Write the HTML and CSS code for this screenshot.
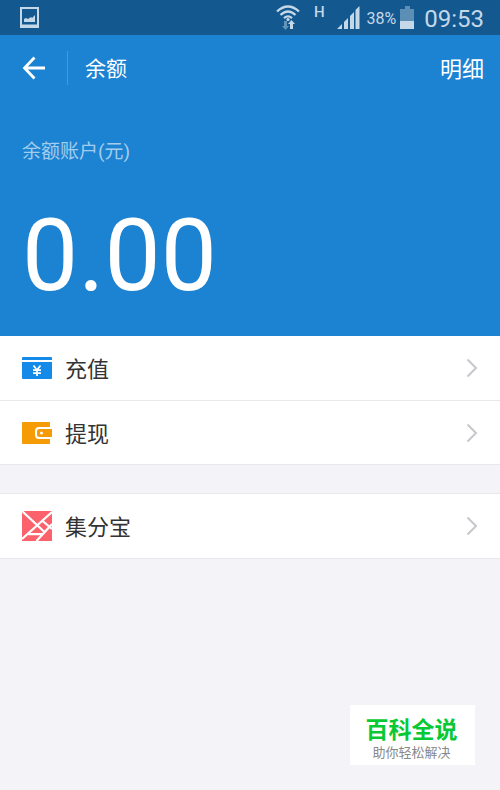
FILE: index.html
```html
<!DOCTYPE html>
<html lang="zh-CN">
<head>
<meta charset="utf-8">
<meta name="viewport" content="width=device-width, initial-scale=1">
<title>余额</title>
<link rel="stylesheet" href="styles.css">
</head>
<body>
<div class="status">
  <svg class="status-photo" width="20" height="21" viewBox="0 0 20 21" aria-hidden="true"><path fill="#c5d8e8" fill-rule="evenodd" d="M0 0h19v21H0zM2 2v15.500h15V2z"/><path fill="#c5d8e8" d="M4 15v-3l2-1 2 1 3-2 1 1 3-3v7z"/></svg>
  <svg class="wifi" width="24" height="25" viewBox="0 0 24 25" aria-hidden="true"><g fill="none" stroke="#c5d8e8" stroke-width="2.300"><path d="M1 6.500Q12-3.500 23 6.500"/><path d="M4.500 10Q12 3 19.500 10"/><path d="M8 13.200Q12 9.500 16 13.200"/></g><circle cx="12" cy="14.500" r="1.600" fill="#c5d8e8"/><path fill="#c5d8e8" d="M15.500 15l3.500 4h-2v5h-3v-5h-2z"/><path fill="#6293b8" d="M8 16h3v5h2l-3.500 4L6 21h2z"/></svg>
  <span class="network">H</span>
  <svg class="signal" width="24" height="23" viewBox="0 0 24 23" aria-hidden="true"><path fill="#c5d8e8" d="M0 23l5-5v5zM7 23v-7l4-4v11zM13 23V10l4-4v17zM18.500 23V4l4-4v23z"/></svg>
  <span class="percent">38%</span>
  <svg class="battery" width="14" height="23" viewBox="0 0 14 23" aria-hidden="true"><path fill="#5c8fb5" d="M0 3h5V0h5v3h4v20H0z"/><path fill="#c5d8e8" d="M0 15h14v8H0z"/></svg>
  <span class="clock">09:53</span>
</div>
<header class="bar">
  <button class="back" type="button" aria-label="返回"><svg width="24" height="24" viewBox="0 0 24 24"><path fill="none" stroke="#fff" stroke-width="2.800" d="M12.500 1.500L2.500 12l10 10.500M2 12h21"/></svg></button>
  <h1 class="title">余额</h1>
  <a class="detail" href="#detail">明细</a>
</header>
<section class="balance">
  <p class="caption">余额账户(元)</p>
  <p class="amount">0.00</p>
</section>
<nav>
  <div class="group">
    <a class="row" href="#recharge">
      <svg class="icon" width="30" height="30" viewBox="0 0 30 30" aria-hidden="true"><path fill="#148be9" d="M0 6V5q0-1 1-1h28q1 0 1 1v2H0zM0 9h30v16q0 1-1 1H1q-1 0-1-1z"/><path fill="none" stroke="#fff" stroke-width="1.700" d="M11.500 12.500L15 17l3.500-4.500M15 16.500V23M11 17.200h8M11 20.200h8"/></svg>
      <span class="label">充值</span>
      <svg class="chevron" width="12" height="20" viewBox="0 0 12 20" aria-hidden="true"><path d="M1.500 1.500L10 10l-8.500 8.500"/></svg>
    </a>
    <a class="row" href="#withdraw">
      <svg class="icon" width="30" height="30" viewBox="0 0 30 30" aria-hidden="true"><path fill="#f59b05" d="M1 4h26q1 0 1 1v4H17q-4 0-4 4v4q0 4 4 4h11v4q0 1-1 1H1q-1 0-1-1V5q0-1 1-1z"/><path fill="#f59b05" fill-rule="evenodd" d="M17.500 11H30v8H17.500q-2.500 0-2.500-2.500v-3q0-2.500 2.500-2.500zM19.500 13.500a1.500 1.500 0 1 0 0 3 1.500 1.500 0 0 0 0-3z"/></svg>
      <span class="label">提现</span>
      <svg class="chevron" width="12" height="20" viewBox="0 0 12 20" aria-hidden="true"><path d="M1.500 1.500L10 10l-8.500 8.500"/></svg>
    </a>
  </div>
  <div class="group">
    <a class="row" href="#points">
      <svg class="icon" width="30" height="30" viewBox="0 0 30 30" aria-hidden="true"><path fill="#fb626b" d="M0 0h30v30H0z"/><path fill="none" stroke="#fff" stroke-width="2.200" d="M0 0l23 21.500M30 1L0 28M20 9.500l10 8.500M30 13L14.500 30M6.500 23.200H20"/></svg>
      <span class="label">集分宝</span>
      <svg class="chevron" width="12" height="20" viewBox="0 0 12 20" aria-hidden="true"><path d="M1.500 1.500L10 10l-8.500 8.500"/></svg>
    </a>
  </div>
</nav>
<aside class="stamp"><strong class="stamp-name">百科全说</strong><span class="stamp-note">助你轻松解决</span></aside>
</body>
</html>
```
FILE: styles.css
```css
* { box-sizing: border-box; }
body {
  margin: 0;
  min-height: 100vh;
  background: #f3f3f8;
  color: #333;
  font-family: Roboto, "Noto Sans CJK SC", sans-serif;
}
h1, p { margin: 0; font-weight: 400; }
a { color: inherit; text-decoration: none; }
svg { display: block; flex: none; }

.status {
  display: flex;
  align-items: center;
  height: 35px;
  padding: 0 16px 0 20px;
  background: #13598f;
  color: #c5d8e8;
}
.wifi { margin-left: auto; }
.network { margin: 0 12px 12px 14px; font-size: 15px; line-height: 16px; font-weight: 500; }
.percent { margin: 2px 4px 0 6px; font-size: 16px; line-height: 20px; }
.clock { margin: 2px 0 0 10px; font-size: 24px; line-height: 28px; }

.bar {
  display: flex;
  align-items: center;
  height: 65px;
  padding: 0 16px 0 22px;
  background: #1c82d2;
  color: #fff;
}
.back { padding: 0; border: 0; background: none; }
.title {
  margin-left: 21px;
  padding: 2px 0 0 17px;
  border-left: 1px solid #4598da;
  font-size: 21px;
  line-height: 32px;
}
.detail { margin-left: auto; padding-top: 4px; font-size: 22px; line-height: 32px; }

.balance {
  padding: 40px 22px 20px;
  background: #1c82d2;
  color: #fff;
}
.caption { color: #a4cded; font-size: 19px; line-height: 24px; }
.amount { margin-top: 32px; font-size: 100px; line-height: 120px; }

.group {
  margin-bottom: 28px;
  border-bottom: 1px solid #e8e8eb;
  background: #fff;
}
.group + .group { border-top: 1px solid #e8e8eb; }
.row {
  display: flex;
  align-items: center;
  height: 64px;
  padding: 0 22px;
}
.row + .row { border-top: 1px solid #e8e8eb; }
.label { margin: 4px auto 0 13px; font-size: 22px; line-height: 32px; }
.chevron { fill: none; stroke: #c7c7cc; stroke-width: 2; }

.stamp {
  position: fixed;
  right: 25px;
  bottom: 25px;
  display: flex;
  flex-direction: column;
  align-items: center;
  width: 125px;
  padding: 12px 2px 4px 0;
  background: #fff;
}
.stamp-name { color: #07c933; font-size: 23px; line-height: 28px; font-weight: 700; }
.stamp-note { color: #888; font-size: 13px; line-height: 16px; }
```
